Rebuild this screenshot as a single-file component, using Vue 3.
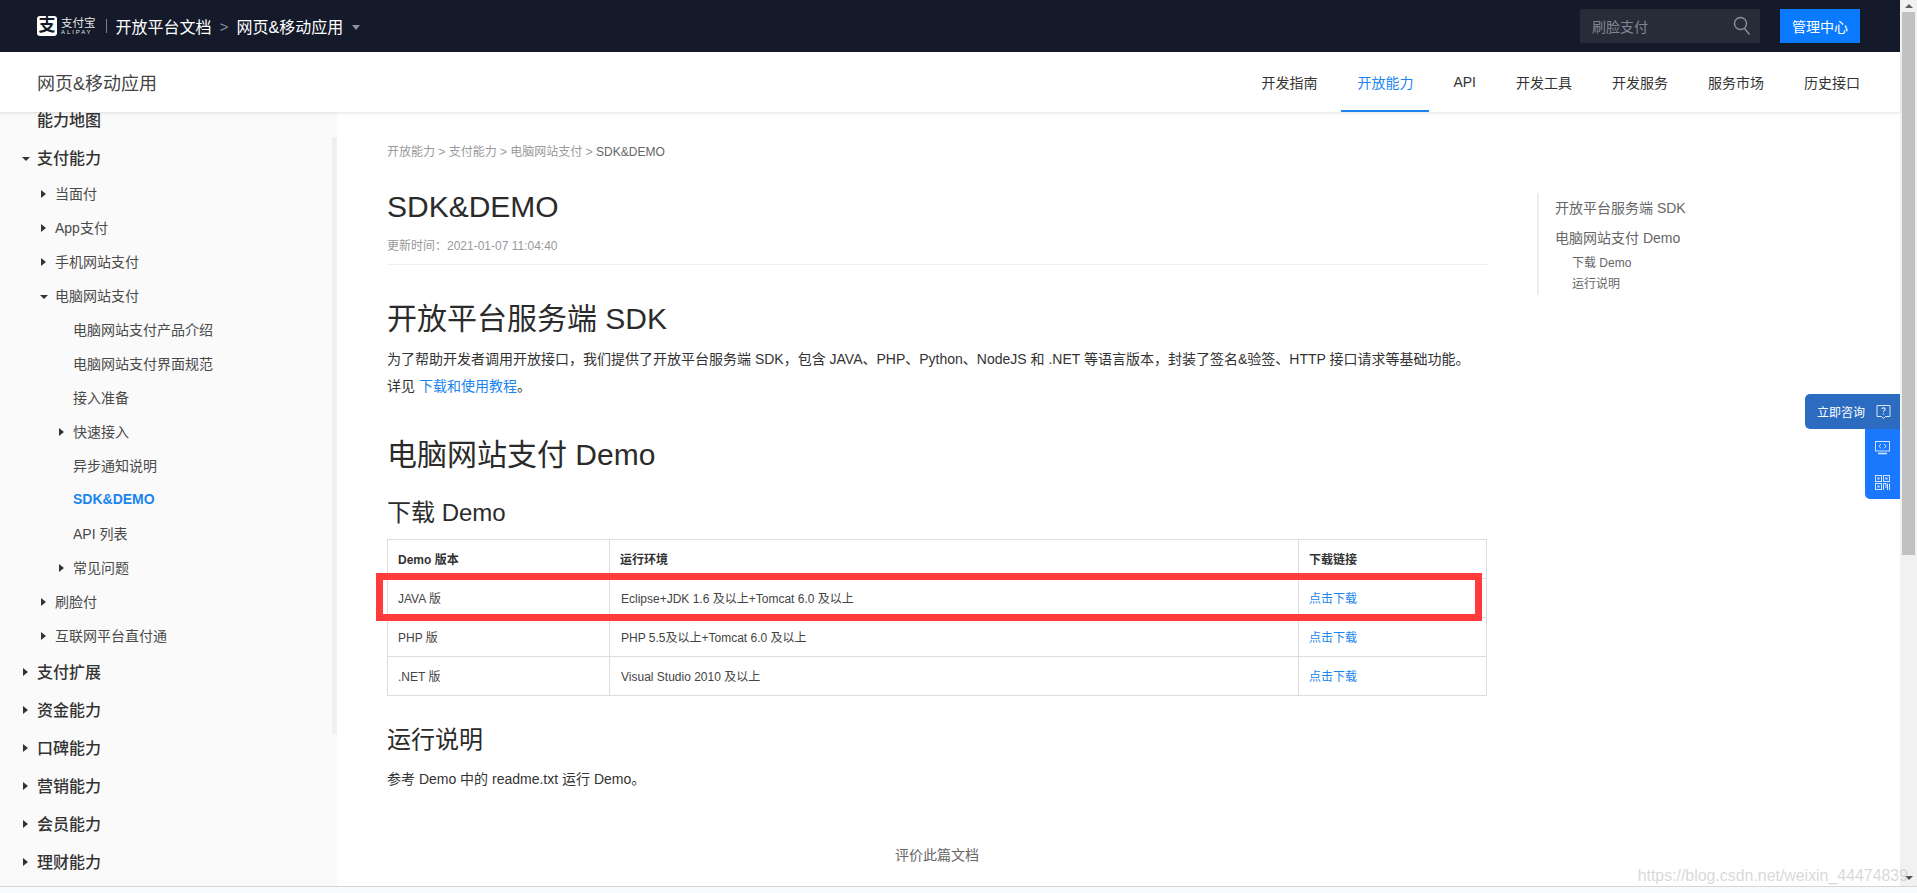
<template>
  <div class="window">
    <div class="frame">
      <div class="main">
        <header class="topbar">
          <div class="logo">
            <span class="logo-mark">支</span>
            <div class="logo-text">
              <span class="logo-cn">支付宝</span>
              <span class="logo-en">ALIPAY</span>
            </div>
          </div>
          <span class="top-sep"></span>
          <span class="top-link">开放平台文档</span>
          <span class="top-arrow">&gt;</span>
          <span class="top-link">网页&amp;移动应用</span>
          <span class="top-caret"></span>
          <div class="top-right">
            <div class="search">
              <span>刷脸支付</span>
              <svg width="18" height="20" viewBox="0 0 18 20" fill="none" stroke="#8b909a" stroke-width="1.4">
                <circle cx="7.5" cy="7.5" r="6" />
                <path d="M11.5 12.5L16.5 18.5" />
              </svg>
            </div>
            <button class="admin">管理中心</button>
          </div>
        </header>

        <nav class="subnav">
          <span class="subnav-title">网页&amp;移动应用</span>
          <div class="subnav-items">
            <a v-for="item in navItems" :key="item" class="nav-item" :class="{ active: item === '开放能力' }">{{ item }}</a>
          </div>
        </nav>

        <div class="body">
          <aside class="sidebar">
            <ul class="tree">
              <li v-for="row in tree" :key="row.text" class="row" :class="['depth' + row.depth, { current: row.current }]">
                <span class="arrow-box"><i v-if="row.arrow" :class="row.arrow"></i></span>
                <span>{{ row.text }}</span>
              </li>
            </ul>
            <div class="side-thumb"></div>
          </aside>

          <div class="content">
            <article class="article">
              <div class="crumbs">开放能力 &gt; 支付能力 &gt; 电脑网站支付 &gt; <b>SDK&amp;DEMO</b></div>
              <h1>SDK&amp;DEMO</h1>
              <div class="updated">更新时间：2021-01-07 11:04:40</div>

              <h2 class="first">开放平台服务端 SDK</h2>
              <p class="intro">为了帮助开发者调用开放接口，我们提供了开放平台服务端 SDK，包含 JAVA、PHP、Python、NodeJS 和 .NET 等语言版本，封装了签名&amp;验签、HTTP 接口请求等基础功能。</p>
              <p>详见 <a>下载和使用教程</a>。</p>

              <h2 class="second">电脑网站支付 Demo</h2>
              <h3 class="download">下载 Demo</h3>

              <div class="table-wrap">
                <table>
                  <thead>
                    <tr>
                      <th class="c1">Demo 版本</th>
                      <th class="c2">运行环境</th>
                      <th>下载链接</th>
                    </tr>
                  </thead>
                  <tbody>
                    <tr v-for="d in demos" :key="d.name">
                      <td>{{ d.name }}</td>
                      <td class="env">{{ d.env }}</td>
                      <td><a>点击下载</a></td>
                    </tr>
                  </tbody>
                </table>
                <div class="red-box"></div>
              </div>

              <h3 class="run">运行说明</h3>
              <p class="run-text">参考 Demo 中的 readme.txt 运行 Demo。</p>
              <div class="rate">评价此篇文档</div>
            </article>

            <div class="toc">
              <div class="toc-main">开放平台服务端 SDK</div>
              <div class="toc-main">电脑网站支付 Demo</div>
              <div class="toc-sub">下载 Demo</div>
              <div class="toc-sub">运行说明</div>
            </div>
          </div>
        </div>
      </div>

      <div class="page-scroll">
        <i class="sb-up"></i>
        <div class="sb-thumb"></div>
        <i class="sb-down"></i>
      </div>

      <div class="float-tools">
        <div class="consult">
          <span>立即咨询</span>
          <svg width="15" height="16" viewBox="0 0 15 16" fill="none" stroke="#d5e5fb" stroke-width="1">
            <path d="M1 1.5H14V12.5H9.5L7.5 14.5L5.5 12.5H1Z" />
            <path d="M5.8 5C6 3.4 9.2 3.4 9.2 5.2C9.2 6.4 7.5 6.4 7.5 8M7.5 9.2V10.4" stroke-width="1.2" />
          </svg>
        </div>
        <div class="tool-rest">
          <svg width="15" height="14" viewBox="0 0 15 14" fill="none" stroke="#d5e5fb" stroke-width="1">
            <rect x="0.5" y="0.5" width="14" height="9.5" />
            <path d="M6 3L4 5.2L6 7.4M9 3L11 5.2L9 7.4" />
            <path d="M3 12.5H12" stroke-width="1.6" />
          </svg>
          <svg width="15" height="15" viewBox="0 0 15 15" fill="none" stroke="#d5e5fb" stroke-width="1">
            <rect x="0.5" y="0.5" width="6" height="6" />
            <rect x="8.5" y="0.5" width="6" height="6" />
            <rect x="0.5" y="8.5" width="6" height="6" />
            <path d="M2.5 2.5H4.5V4.5H2.5ZM10.5 2.5H12.5V4.5H10.5ZM2.5 10.5H4.5V12.5H2.5Z" fill="#d5e5fb" stroke="none" />
            <path d="M8.5 15V8.5H11V13M12.5 8.5V15M14.5 8.5V15" />
          </svg>
        </div>
      </div>

      <span class="watermark">https://blog.csdn.net/weixin_44474839</span>
    </div>
    <div class="strip"></div>
  </div>
</template>

<script setup>
const navItems = ["开发指南", "开放能力", "API", "开发工具", "开发服务", "服务市场", "历史接口"]

const tree = [
  { text: "能力地图", depth: 0 },
  { text: "支付能力", depth: 0, arrow: "down" },
  { text: "当面付", depth: 1, arrow: "right" },
  { text: "App支付", depth: 1, arrow: "right" },
  { text: "手机网站支付", depth: 1, arrow: "right" },
  { text: "电脑网站支付", depth: 1, arrow: "down" },
  { text: "电脑网站支付产品介绍", depth: 2 },
  { text: "电脑网站支付界面规范", depth: 2 },
  { text: "接入准备", depth: 2 },
  { text: "快速接入", depth: 2, arrow: "right" },
  { text: "异步通知说明", depth: 2 },
  { text: "SDK&DEMO", depth: 2, current: true },
  { text: "API 列表", depth: 2 },
  { text: "常见问题", depth: 2, arrow: "right" },
  { text: "刷脸付", depth: 1, arrow: "right" },
  { text: "互联网平台直付通", depth: 1, arrow: "right" },
  { text: "支付扩展", depth: 0, arrow: "right" },
  { text: "资金能力", depth: 0, arrow: "right" },
  { text: "口碑能力", depth: 0, arrow: "right" },
  { text: "营销能力", depth: 0, arrow: "right" },
  { text: "会员能力", depth: 0, arrow: "right" },
  { text: "理财能力", depth: 0, arrow: "right" }
]

const demos = [
  { name: "JAVA 版", env: "Eclipse+JDK 1.6 及以上+Tomcat 6.0 及以上" },
  { name: "PHP 版", env: "PHP 5.5及以上+Tomcat 6.0 及以上" },
  { name: ".NET 版", env: "Visual Studio 2010 及以上" }
]
</script>

<style>
html, body {
  margin: 0;
  overflow: hidden;
}
</style>

<style scoped>
.window {
  width: 1917px;
  height: 893px;
  overflow: hidden;
  background: #fff;
  color: #333;
  font-family: "Liberation Sans", "Noto Sans CJK SC", sans-serif;
}

.frame {
  position: relative;
  display: flex;
  height: 886px;
  border-bottom: 1px solid #d6d6d6;
  box-sizing: content-box;
}

.strip {
  height: 6px;
  background: #f8fafd;
}

.main {
  width: 1900px;
  display: flex;
  flex-direction: column;
}

/* top dark bar */
.topbar {
  height: 52px;
  flex: none;
  display: flex;
  align-items: center;
  padding: 0 40px 0 37px;
  box-sizing: border-box;
  background: #141a2a;
  color: #fff;
}

.logo {
  display: flex;
  align-items: center;
  gap: 4px;
}

.logo-mark {
  width: 20px;
  height: 20px;
  border-radius: 3px;
  background: #fff;
  color: #141a2a;
  font-size: 17px;
  font-weight: 700;
  line-height: 20px;
  text-align: center;
}

.logo-text {
  display: flex;
  flex-direction: column;
  color: #e6e6e6;
}

.logo-cn {
  font-size: 11.5px;
  line-height: 12px;
}

.logo-en {
  font-size: 6px;
  line-height: 7px;
  letter-spacing: 1.9px;
}

.top-sep {
  width: 1px;
  height: 14px;
  margin: 0 9px 0 10px;
  background: #7d818b;
}

.top-link {
  font-size: 16px;
}

.top-arrow {
  width: 25px;
  text-align: center;
  color: #8b909a;
  font-size: 15px;
}

.top-caret {
  margin: 2px 0 0 9px;
  border-top: 5px solid #8b909a;
  border-left: 4px solid transparent;
  border-right: 4px solid transparent;
}

.top-right {
  margin-left: auto;
  display: flex;
  gap: 20px;
}

.search {
  width: 180px;
  height: 34px;
  display: flex;
  align-items: center;
  justify-content: space-between;
  padding: 0 9px 0 12px;
  box-sizing: border-box;
  border-radius: 2px;
  background: #272c39;
  color: #81858f;
  font-size: 14px;
}

.admin {
  width: 80px;
  height: 34px;
  padding: 0;
  border: none;
  background: #0a7bff;
  color: #fff;
  font-family: inherit;
  font-size: 14px;
}

/* second bar */
.subnav {
  position: relative;
  z-index: 2;
  height: 60px;
  flex: none;
  display: flex;
  align-items: center;
  justify-content: space-between;
  padding: 0 40px 0 37px;
  box-sizing: border-box;
  background: #fff;
  box-shadow: 0 1px 3px rgba(0, 0, 0, .12);
}

.subnav-title {
  font-size: 18px;
  color: #444;
}

.subnav-items {
  display: flex;
  align-self: stretch;
}

.nav-item {
  display: flex;
  align-items: center;
  margin-left: 40px;
  font-size: 14px;
  color: #333;
}

.nav-item.active {
  margin: 0 -16px 0 24px;
  padding: 0 16px;
  color: #1a85ee;
  box-shadow: inset 0 -2px 0 #1a85ee;
}

.body {
  flex: 1;
  display: flex;
  min-height: 0;
}

/* left tree */
.sidebar {
  position: relative;
  width: 337px;
  flex: none;
  overflow: hidden;
  background: #fafafa;
}

.tree {
  margin: -12px 0 0;
  padding: 0;
  list-style: none;
}

.row {
  display: flex;
  align-items: center;
  height: 34px;
  font-size: 14px;
  color: #4a4a4a;
}

.row.depth0 {
  height: 38px;
  padding-left: 22px;
  font-size: 16px;
  font-weight: 500;
  color: #333;
}

.row.depth1 {
  padding-left: 40px;
}

.row.depth2 {
  padding-left: 58px;
}

.row.current {
  color: #1a85ee;
  font-weight: 700;
}

.arrow-box {
  width: 15px;
  flex: none;
  display: flex;
  align-items: center;
}

.arrow-box .right {
  margin: 1px 0 0 1px;
  border-left: 5px solid #333;
  border-top: 4px solid transparent;
  border-bottom: 4px solid transparent;
}

.arrow-box .down {
  margin-top: 3px;
  border-top: 4px solid #333;
  border-left: 4px solid transparent;
  border-right: 4px solid transparent;
}

.side-thumb {
  position: absolute;
  right: 0;
  top: 25px;
  width: 5px;
  height: 597px;
  background: #f0f0f0;
}

/* article */
.content {
  flex: 1;
  display: flex;
  gap: 50px;
  padding-left: 50px;
}

.article {
  width: 1100px;
  flex: none;
  padding-top: 31px;
}

.crumbs {
  font-size: 12px;
  line-height: 18px;
  color: #999;
}

.crumbs b {
  font-weight: 400;
  color: #666;
}

h1, h2, h3 {
  margin: 0;
  font-weight: 400;
  color: #2b2b2b;
}

h1 {
  margin-top: 25px;
  font-size: 30px;
  line-height: 42px;
}

.updated {
  margin-top: 9px;
  padding-bottom: 9px;
  border-bottom: 1px solid #eee;
  font-size: 12px;
  line-height: 18px;
  color: #999;
}

h2 {
  font-size: 30px;
  line-height: 42px;
}

h2.first {
  margin-top: 33px;
}

h2.second {
  margin-top: 34px;
}

h3 {
  font-size: 24px;
  line-height: 34px;
}

h3.download {
  margin-top: 20px;
}

h3.run {
  margin-top: 27px;
}

p {
  margin: 0;
  font-size: 14px;
  line-height: 27px;
  color: #333;
}

p.intro {
  margin-top: 6px;
}

p.run-text {
  margin-top: 9px;
}

a {
  color: #1a85ee;
}

.table-wrap {
  position: relative;
  margin-top: 9px;
}

table {
  width: 1100px;
  border-collapse: collapse;
  table-layout: fixed;
  font-size: 12px;
  color: #444;
}

th, td {
  height: 39px;
  padding: 0 10px 2px;
  box-sizing: border-box;
  border: 1px solid #ddd;
  text-align: left;
}

td.env {
  padding-left: 11px;
}

th {
  color: #333;
}

.c1 {
  width: 222px;
}

.c2 {
  width: 689px;
}

.red-box {
  position: absolute;
  left: -11px;
  top: 34px;
  width: 1106px;
  height: 48px;
  box-sizing: border-box;
  border: 7px solid #ff3b3b;
}

.rate {
  margin-top: 53px;
  font-size: 14px;
  line-height: 18px;
  text-align: center;
  color: #666;
}

/* right outline */
.toc {
  width: 300px;
  height: 102px;
  margin-top: 81px;
  padding-left: 16px;
  box-sizing: border-box;
  border-left: 2px solid #eee;
  color: #666;
}

.toc-main {
  font-size: 14px;
  line-height: 30px;
}

.toc-sub {
  padding-left: 17px;
  font-size: 12px;
  line-height: 21px;
}

/* page scrollbar */
.page-scroll {
  width: 17px;
  flex: none;
  display: flex;
  flex-direction: column;
  align-items: center;
  background: #f1f1f1;
}

.sb-up {
  margin: 4px 0;
  border-bottom: 4px solid #606060;
  border-left: 4px solid transparent;
  border-right: 4px solid transparent;
}

.sb-thumb {
  width: 13px;
  height: 543px;
  background: #c1c1c1;
}

.sb-down {
  margin-top: auto;
  margin-bottom: 6px;
  border-top: 4px solid #505050;
  border-left: 4px solid transparent;
  border-right: 4px solid transparent;
}

/* floating consult widget */
.float-tools {
  position: absolute;
  z-index: 3;
  top: 394px;
  right: 17px;
  width: 95px;
  display: flex;
  flex-direction: column;
  align-items: flex-end;
}

.consult {
  width: 95px;
  height: 35px;
  display: flex;
  align-items: center;
  gap: 11px;
  padding-left: 12px;
  box-sizing: border-box;
  border-radius: 5px 0 0 5px;
  background: #2b6cc0;
  color: #fff;
  font-size: 12px;
}

.tool-rest {
  width: 35px;
  height: 70px;
  display: flex;
  flex-direction: column;
  align-items: center;
  gap: 20px;
  padding-top: 12px;
  box-sizing: border-box;
  border-radius: 0 0 0 5px;
  background: #1a78ff;
}

.watermark {
  position: absolute;
  z-index: 3;
  right: 9px;
  bottom: 1px;
  font-size: 15.9px;
  color: rgba(190, 190, 190, .6);
}
</style>
